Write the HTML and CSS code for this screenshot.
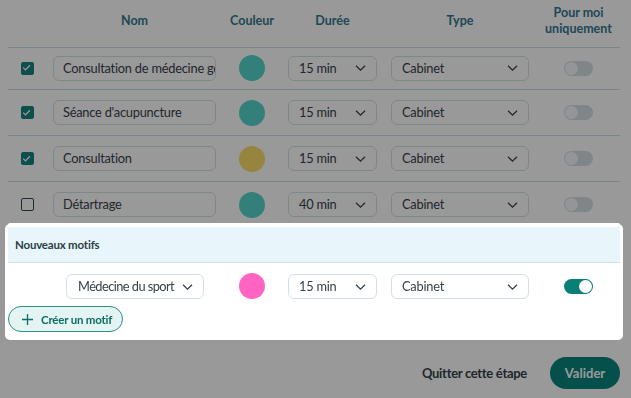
FILE: index.html
```html
<!DOCTYPE html>
<html lang="fr">
<head>
<meta charset="utf-8">
<link rel="stylesheet" href="styles.css">
</head>
<body>
<div class="page">
  <div class="table">
    <div class="grid head">
      <div></div>
      <div class="h h-name">Nom</div>
      <div class="h">Couleur</div>
      <div class="h h-dur">Durée</div>
      <div class="h h-type">Type</div>
      <div class="h h-me">Pour moi<br>uniquement</div>
    </div>

    <div class="grid row first">
      <span class="check on"><svg width="13" height="13" viewBox="0 0 13 13"><path d="M3.2 6.6l2.3 2.3 4.4-4.6" fill="none" stroke="#fff" stroke-width="1.3"/></svg></span>
      <div class="input">Consultation de médecine générale</div>
      <span class="dot teal"></span>
      <div class="select dur"><span>15 min</span><svg width="11" height="6" viewBox="0 0 11 6"><path d="M1 .8l4.5 4.3L10 .8" fill="none" stroke="#37414a" stroke-width="1.3"/></svg></div>
      <div class="select type"><span>Cabinet</span><svg width="11" height="6" viewBox="0 0 11 6"><path d="M1 .8l4.5 4.3L10 .8" fill="none" stroke="#37414a" stroke-width="1.3"/></svg></div>
      <span class="toggle"></span>
    </div>

    <div class="grid row">
      <span class="check on"><svg width="13" height="13" viewBox="0 0 13 13"><path d="M3.2 6.6l2.3 2.3 4.4-4.6" fill="none" stroke="#fff" stroke-width="1.3"/></svg></span>
      <div class="input">Séance d'acupuncture</div>
      <span class="dot teal"></span>
      <div class="select dur"><span>15 min</span><svg width="11" height="6" viewBox="0 0 11 6"><path d="M1 .8l4.5 4.3L10 .8" fill="none" stroke="#37414a" stroke-width="1.3"/></svg></div>
      <div class="select type"><span>Cabinet</span><svg width="11" height="6" viewBox="0 0 11 6"><path d="M1 .8l4.5 4.3L10 .8" fill="none" stroke="#37414a" stroke-width="1.3"/></svg></div>
      <span class="toggle"></span>
    </div>

    <div class="grid row">
      <span class="check on"><svg width="13" height="13" viewBox="0 0 13 13"><path d="M3.2 6.6l2.3 2.3 4.4-4.6" fill="none" stroke="#fff" stroke-width="1.3"/></svg></span>
      <div class="input">Consultation</div>
      <span class="dot yellow"></span>
      <div class="select dur"><span>15 min</span><svg width="11" height="6" viewBox="0 0 11 6"><path d="M1 .8l4.5 4.3L10 .8" fill="none" stroke="#37414a" stroke-width="1.3"/></svg></div>
      <div class="select type"><span>Cabinet</span><svg width="11" height="6" viewBox="0 0 11 6"><path d="M1 .8l4.5 4.3L10 .8" fill="none" stroke="#37414a" stroke-width="1.3"/></svg></div>
      <span class="toggle"></span>
    </div>

    <div class="grid row last">
      <span class="check"></span>
      <div class="input">Détartrage</div>
      <span class="dot teal"></span>
      <div class="select dur"><span>40 min</span><svg width="11" height="6" viewBox="0 0 11 6"><path d="M1 .8l4.5 4.3L10 .8" fill="none" stroke="#37414a" stroke-width="1.3"/></svg></div>
      <div class="select type"><span>Cabinet</span><svg width="11" height="6" viewBox="0 0 11 6"><path d="M1 .8l4.5 4.3L10 .8" fill="none" stroke="#37414a" stroke-width="1.3"/></svg></div>
      <span class="toggle"></span>
    </div>
  </div>

  <section class="new">
    <div class="band">Nouveaux motifs</div>
    <div class="grid newrow">
      <div></div>
      <div class="select motif"><span>Médecine du sport</span><svg width="11" height="6" viewBox="0 0 11 6"><path d="M1 .8l4.5 4.3L10 .8" fill="none" stroke="#37414a" stroke-width="1.3"/></svg></div>
      <span class="dot pink"></span>
      <div class="select dur"><span>15 min</span><svg width="11" height="6" viewBox="0 0 11 6"><path d="M1 .8l4.5 4.3L10 .8" fill="none" stroke="#37414a" stroke-width="1.3"/></svg></div>
      <div class="select type"><span>Cabinet</span><svg width="11" height="6" viewBox="0 0 11 6"><path d="M1 .8l4.5 4.3L10 .8" fill="none" stroke="#37414a" stroke-width="1.3"/></svg></div>
      <span class="toggle active"></span>
    </div>
    <button class="create"><svg width="11" height="11" viewBox="0 0 11 11"><path d="M5.5 0v11M0 5.5h11" stroke="#0d6e66" stroke-width="1.3"/></svg><span>Créer un motif</span></button>
  </section>

  <div class="footer">
    <span class="quit">Quitter cette étape</span>
    <button class="validate">Valider</button>
  </div>

  <div class="overlay"></div>
</div>
</body>
</html>
```

FILE: styles.css
```css
* { box-sizing: border-box; }
html, body { margin: 0; padding: 0; background: #fff; }
body { font-family: Lato, "Noto Sans", sans-serif; color: #37414a; font-size: 13px; }

.page { width: 631px; height: 398px; padding: 0 11px 0 8px; overflow: hidden; }

.grid {
  display: grid;
  grid-template-columns: 38px 170px 72px 103px 152px 77px;
  align-items: center;
}

.head { height: 48px; padding-bottom: 6px; border-bottom: 1px solid #cbdde5; }
.h { font-weight: 700; font-size: 12.5px; color: #33788f; text-align: center; line-height: 16px; }
.h-name { padding-left: 7px; }
.h-dur { width: 89px; }
.h-type { width: 138px; }
.h-me { margin-right: 6px; }

.row { height: 46px; border-bottom: 1px solid #cbdde5; }
.row.first { height: 42px; padding-bottom: 1px; }
.row.last { height: 45px; border-bottom: none; }

.check {
  justify-self: center;
  width: 13px; height: 13px;
  border-radius: 2px;
  border: 1.5px solid #2e4852;
  background: #fff;
  display: flex;
}
.check.on { background: #16847d; border-color: #16847d; }
.check svg { margin: -1.5px; }

.input, .select {
  height: 25px;
  border: 1px solid #d3e1e6;
  border-radius: 6px;
  background: #fff;
  color: #37414a;
  font-size: 12.8px;
  letter-spacing: -0.22px;
  line-height: 23px;
  white-space: nowrap;
  overflow: hidden;
}
.input { margin-left: 7px; width: 163px; padding: 0 9px; }

.select { display: flex; align-items: center; justify-content: space-between; padding: 0 10px 0 10px; }
.select span { line-height: 23px; }
.select.dur { width: 89px; }
.select.type { width: 138px; }
.select.motif { margin-left: 20px; width: 138px; padding-left: 11px; letter-spacing: -0.55px; }

.dot { justify-self: center; width: 26px; height: 26px; border-radius: 50%; }
.dot.teal { background: #55d6cb; }
.dot.yellow { background: #fcdc6a; }
.dot.pink { background: #ff64c3; }

.toggle {
  justify-self: center;
  margin-right: 6px;
  position: relative;
  width: 29px; height: 15px;
  border-radius: 8px;
  background: #d4dfe4;
}
.toggle::after {
  content: "";
  position: absolute;
  left: 1px; top: 1px;
  width: 13px; height: 13px;
  border-radius: 50%;
  background: #f7f9fa;
}
.toggle.active { background: #0a7f76; }
.toggle.active::after { left: 15px; background: #fff; }

.new {
  position: relative;
  z-index: 2;
  background: #fff;
  padding-bottom: 5px;
  box-shadow: 0 0 0 3px #fff, 0 -4px 0 0 #fff;
  border-radius: 2px;
}
.band {
  height: 36px;
  background: #e8f6fb;
  border-bottom: 1px solid #cfe3ea;
  font-weight: 700;
  font-size: 11.5px;
  letter-spacing: -0.2px;
  color: #2c3e48;
  padding-left: 7px;
  display: flex;
  align-items: center;
}
.newrow { height: 36px; padding-top: 11px; align-items: start; }
.newrow .dot { margin-top: -1px; }
.newrow .toggle { margin-top: 5px; }

.create {
  margin-top: 7px;
  height: 26px;
  width: 115px;
  border: 1px solid #2e8f86;
  border-radius: 13px;
  background: #e3f4f2;
  color: #0d6e66;
  font-family: Lato, "Noto Sans", sans-serif;
  font-weight: 700;
  font-size: 11.5px;
  letter-spacing: -0.2px;
  display: flex;
  align-items: center;
  padding: 0 0 0 13px;
  gap: 8px;
}

.footer {
  margin-top: 20px;
  display: flex;
  justify-content: flex-end;
  align-items: center;
  gap: 23px;
}
.quit { font-size: 13px; font-weight: 700; letter-spacing: -0.3px; color: #37414a; }
.validate {
  width: 70px; height: 32px;
  border: none;
  border-radius: 16px;
  background: #0a857d;
  color: #fff;
  font-family: Lato, "Noto Sans", sans-serif;
  font-weight: 700;
  font-size: 13px;
}

.overlay {
  position: fixed;
  inset: 0;
  background: rgba(0, 0, 0, 0.4);
  z-index: 1;
}
```
